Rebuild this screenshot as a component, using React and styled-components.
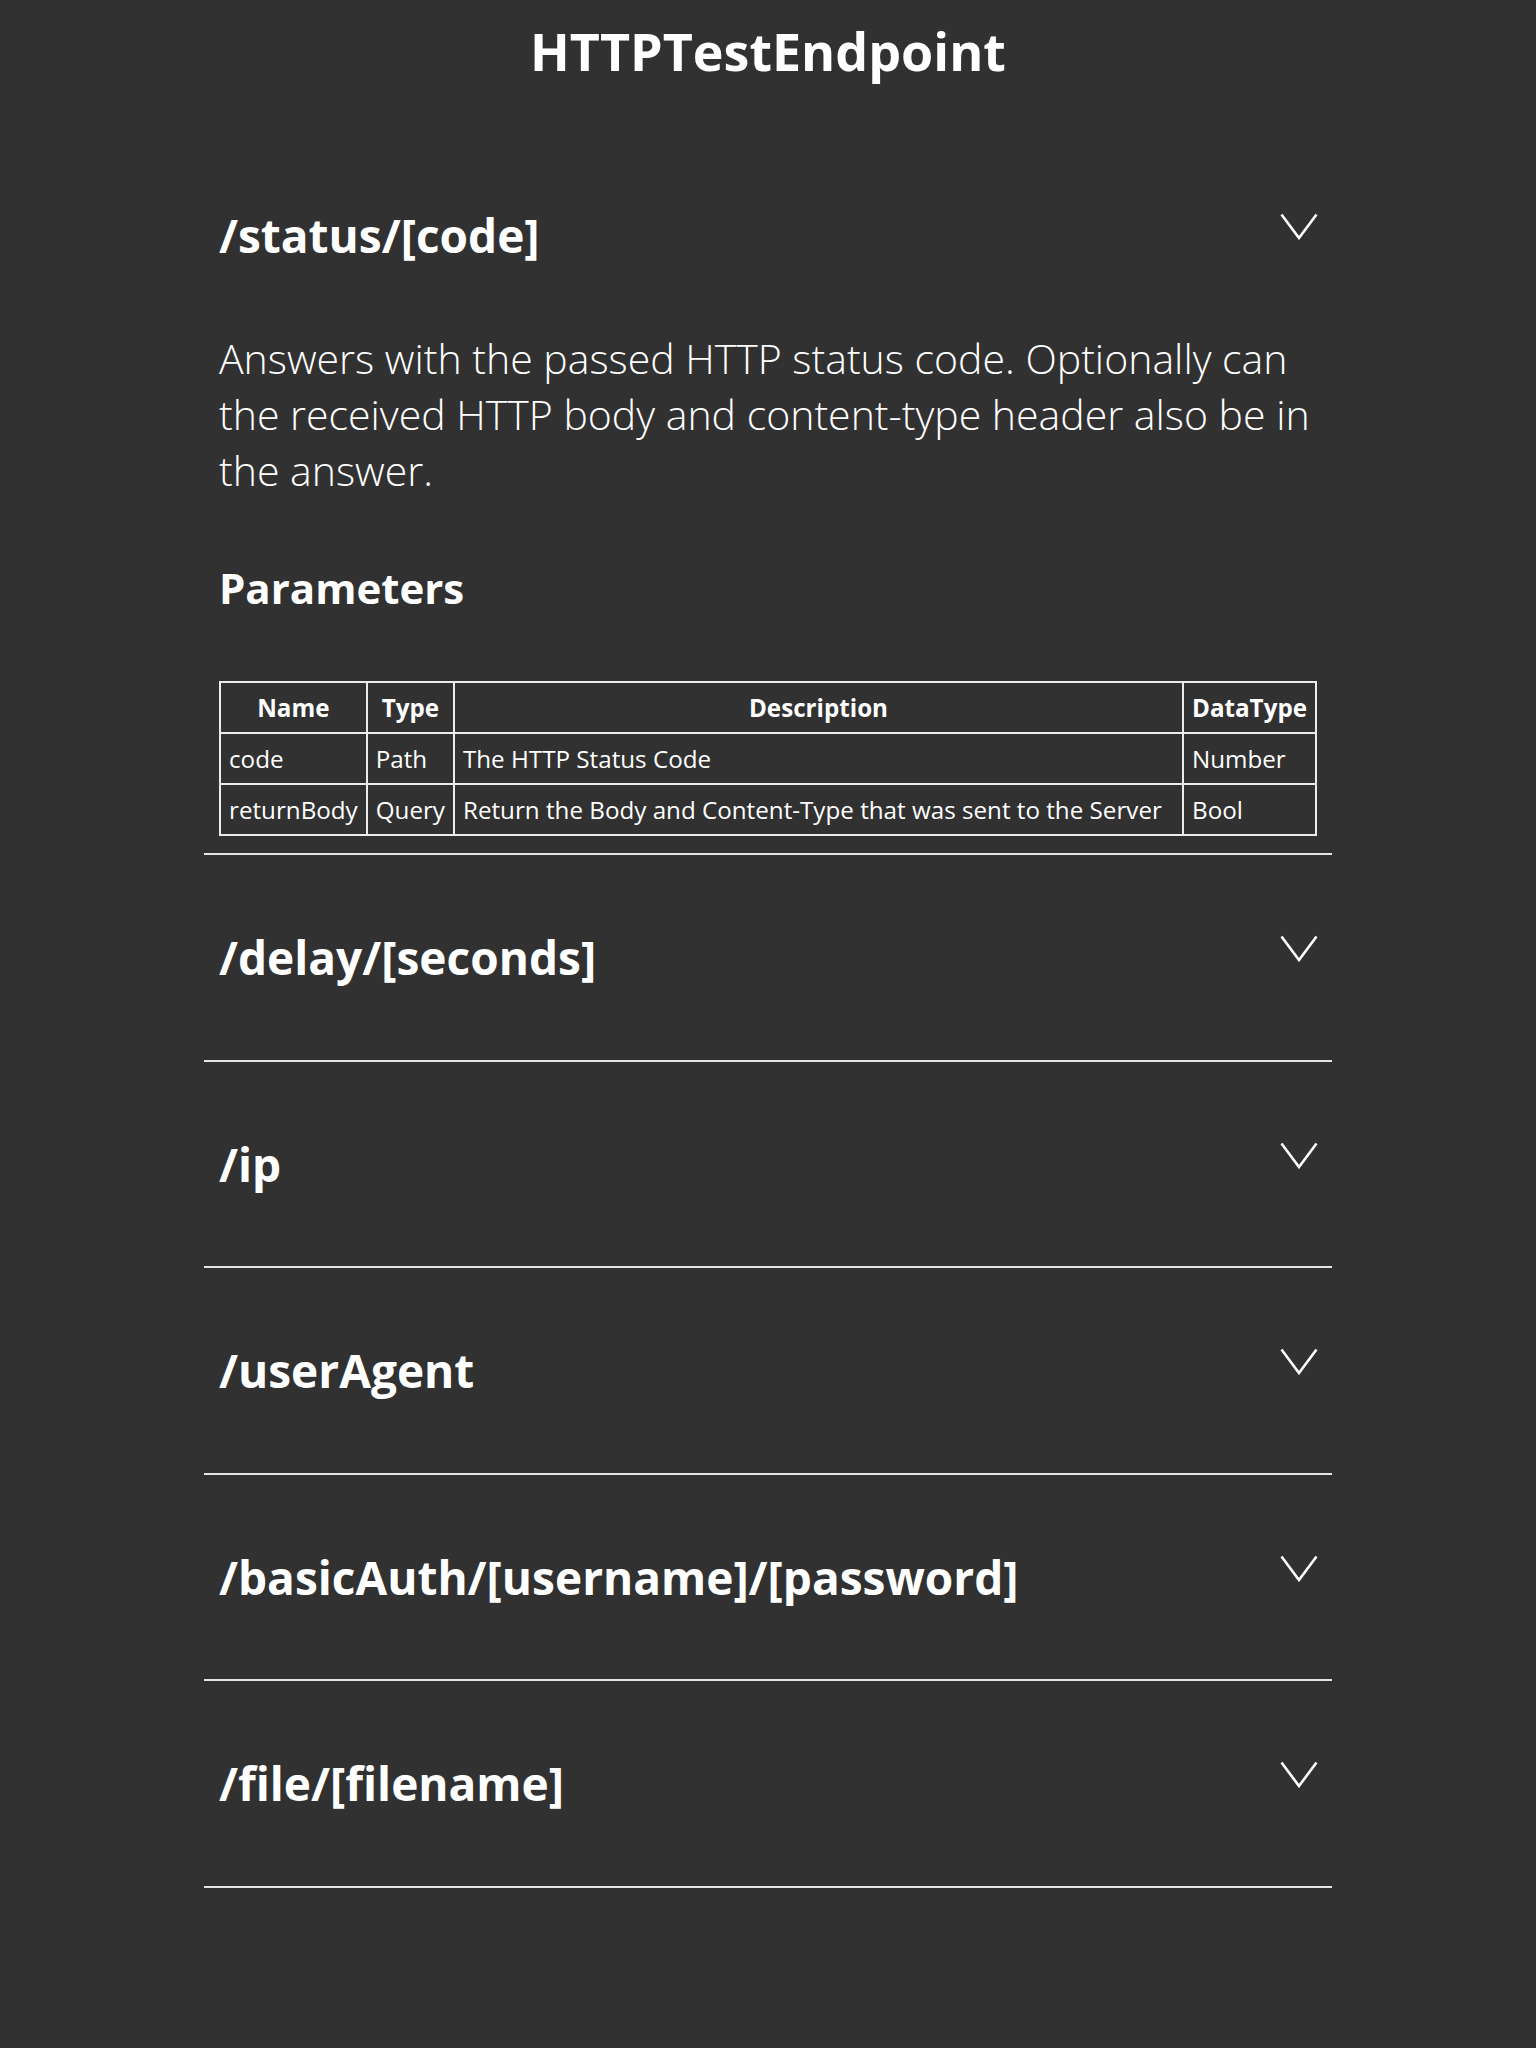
import styled, { createGlobalStyle } from 'styled-components'

const GlobalStyle = createGlobalStyle`
    body {
        margin: 0;
        background-color: #313131;
        color: #ffffff;
        font-family: "Open Sans", "Liberation Sans", sans-serif;
    }
`
const Page = styled.div`
    padding-bottom: 120px;
`
const Title = styled.h1`
    font-size: 52px;
    font-weight: 700;
    line-height: 76px;
    text-align: center;
    margin: 13px 0 44px;
`
const List = styled.div`
    width: 1128px;
    margin: 0 auto;
`
const Item = styled.div`
    border-bottom: 2px solid #e4e4e4;
`
const Header = styled.div`
    display: flex;
    justify-content: space-between;
    align-items: flex-start;
    padding: 70px 15px ${props => props.open ? "0" : "69.6px"};
    cursor: pointer;
`
const Route = styled.h2`
    font-size: 46px;
    font-weight: 700;
    line-height: 65px;
    margin: 0;
`
const Chevron = styled.svg`
    width: 38px;
    height: 27px;
    margin-top: 10px;
    margin-right: -1px;
`
const Body = styled.div`
    padding: 0 15px 17px;
`
const Desc = styled.p`
    font-size: 41px;
    font-weight: 300;
    line-height: 56px;
    margin: 62px 0 0;
`
const SubTitle = styled.h3`
    font-size: 42px;
    font-weight: 700;
    line-height: 60px;
    margin: 60px 0 63px;
`
const Table = styled.table`
    width: 100%;
    border-collapse: collapse;
    border: 2px solid #ececec;
    font-size: 24.2px;
`
const Th = styled.th`
    border: 2px solid #ececec;
    padding: 8px 8px;
    font-weight: 700;
    text-align: center;
    white-space: nowrap;
    width: ${props => props.wide ? "auto" : "1%"};
`
const Td = styled.td`
    border: 2px solid #ececec;
    padding: 8px 8px;
    font-weight: 400;
    white-space: nowrap;
`

const params = [
    { name: "code", type: "Path", desc: "The HTTP Status Code", dataType: "Number" },
    { name: "returnBody", type: "Query", desc: "Return the Body and Content-Type that was sent to the Server", dataType: "Bool" },
]

const routes = [
    { path: "/status/[code]", open: true },
    { path: "/delay/[seconds]" },
    { path: "/ip" },
    { path: "/userAgent" },
    { path: "/basicAuth/[username]/[password]" },
    { path: "/file/[filename]" },
]

function Arrow() {
    return (
        <Chevron viewBox="0 0 38 27" fill="none">
            <polyline points="1.5,1.5 19,25 36.5,1.5" stroke="#ffffff" strokeWidth="2.6" />
        </Chevron>
    )
}

function App() {
    return (
        <Page>
            <GlobalStyle />
            <Title>HTTPTestEndpoint</Title>
            <List>
                {routes.map((route, index) => (
                    <Item key={index}>
                        <Header open={route.open}>
                            <Route>{route.path}</Route>
                            <Arrow />
                        </Header>
                        {route.open && (
                            <Body>
                                <Desc>
                                    Answers with the passed HTTP status code. Optionally can the received HTTP body and content-type header also be in the answer.
                                </Desc>
                                <SubTitle>Parameters</SubTitle>
                                <Table>
                                    <thead>
                                        <tr>
                                            <Th>Name</Th>
                                            <Th>Type</Th>
                                            <Th wide>Description</Th>
                                            <Th>DataType</Th>
                                        </tr>
                                    </thead>
                                    <tbody>
                                        {params.map((p, i) => (
                                            <tr key={i}>
                                                <Td>{p.name}</Td>
                                                <Td>{p.type}</Td>
                                                <Td>{p.desc}</Td>
                                                <Td>{p.dataType}</Td>
                                            </tr>
                                        ))}
                                    </tbody>
                                </Table>
                            </Body>
                        )}
                    </Item>
                ))}
            </List>
        </Page>
    )
}

export default App
